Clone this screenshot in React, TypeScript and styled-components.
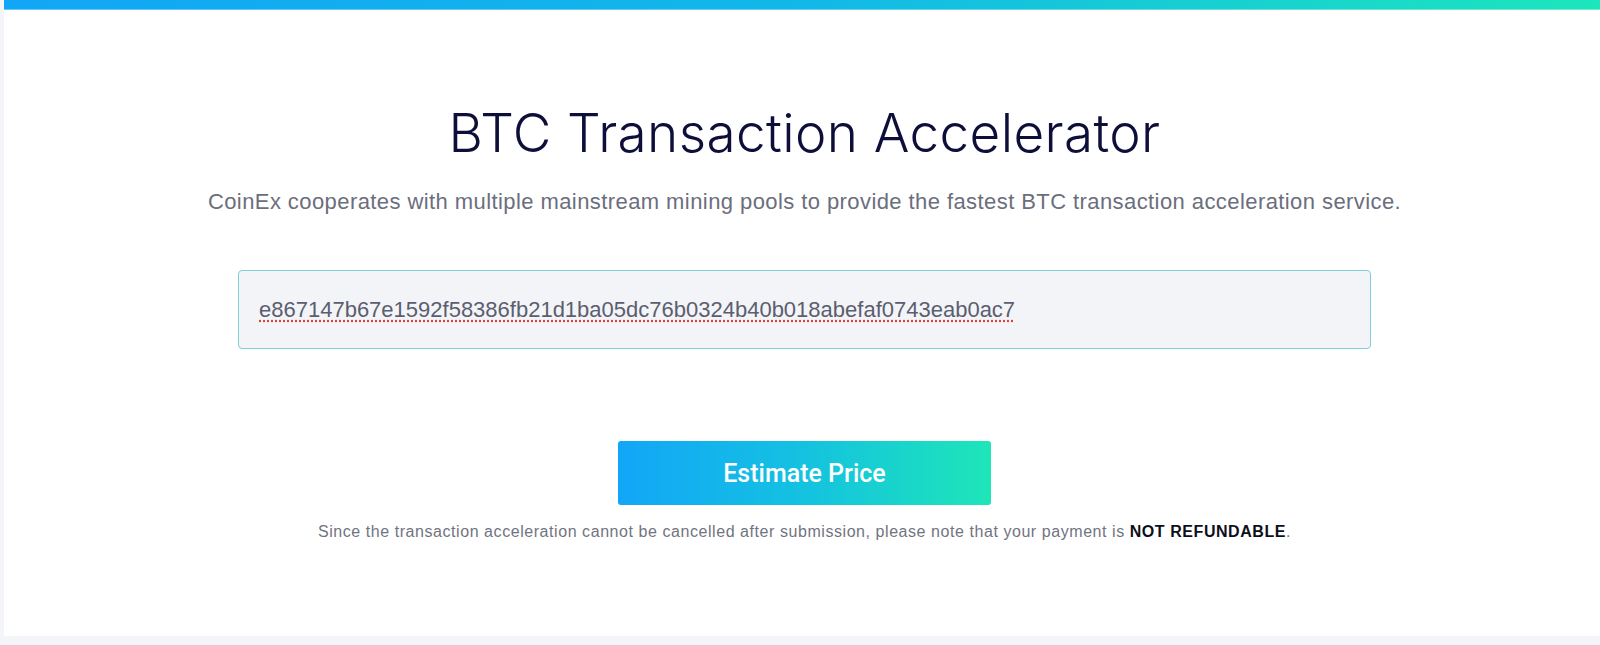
import React from "react";
import styled, { createGlobalStyle } from "styled-components";

const Global = createGlobalStyle`
  html, body { margin: 0; padding: 0; background: #f4f5f9; }
  body { font-family: "Liberation Sans", Arial, sans-serif; }
`;

const Page = styled.div`
  padding-left: 4px;
  height: 645px;
  box-sizing: border-box;
`;

const Panel = styled.main`
  background: #ffffff;
  height: 636px;
  padding-left: 5px;
  display: flex;
  flex-direction: column;
  align-items: center;
`;

const TopBar = styled.div`
  align-self: stretch;
  margin-left: -5px;
  height: 10px;
  background: linear-gradient(90deg, #12a6f6 0%, #12b8e8 50%, #1ce6bc 100%);
  box-shadow: inset 0 -1px 0 rgba(255, 255, 255, 0.35);
`;

const Title = styled.h1`
  margin: 93px 0 0;
  font-family: Inter, "Noto Sans", sans-serif;
  font-weight: 300;
  font-size: 53px;
  line-height: 60px;
  color: #0d0f3a;
  letter-spacing: 0.4px;
`;

const Subtitle = styled.p`
  margin: 25px 0 0;
  font-size: 22px;
  line-height: 28px;
  letter-spacing: 0.42px;
  color: #6b6e7d;
`;

const HashInput = styled.input`
  margin-top: 54px;
  width: 1133px;
  height: 79px;
  box-sizing: border-box;
  padding: 0 20px;
  background: #f3f4f8;
  border: 1px solid #7fd0d8;
  border-radius: 4px;
  font-family: "Liberation Sans", Arial, sans-serif;
  font-size: 22px;
  color: #5b5e6f;
  outline: none;
  text-decoration: underline dotted #e0413b;
  text-underline-offset: 4px;
`;

const EstimateButton = styled.button`
  margin-top: 92px;
  width: 373px;
  height: 64px;
  border: none;
  border-radius: 3px;
  background: linear-gradient(90deg, #12a6f8 0%, #14c2e0 50%, #1ee6b8 100%);
  color: #ffffff;
  font-family: Roboto, "Liberation Sans", sans-serif;
  font-size: 25px;
  font-weight: 500;
  cursor: pointer;
`;

const Note = styled.p`
  margin: 16px 0 0;
  font-size: 16px;
  line-height: 22px;
  letter-spacing: 0.56px;
  color: #717480;
`;

const Strong = styled.strong`
  color: #0d0f1a;
  font-weight: 700;
`;

export default function App() {
  return (
    <>
      <Global />
      <Page>
        <Panel>
          <TopBar />
          <Title>BTC Transaction Accelerator</Title>
          <Subtitle>
            CoinEx cooperates with multiple mainstream mining pools to provide the fastest BTC transaction acceleration service.
          </Subtitle>
          <HashInput
            defaultValue="e867147b67e1592f58386fb21d1ba05dc76b0324b40b018abefaf0743eab0ac7"
            spellCheck={false}
          />
          <EstimateButton>Estimate Price</EstimateButton>
          <Note>
            Since the transaction acceleration cannot be cancelled after submission, please note that your payment is{" "}
            <Strong>NOT REFUNDABLE</Strong>.
          </Note>
        </Panel>
      </Page>
    </>
  );
}
